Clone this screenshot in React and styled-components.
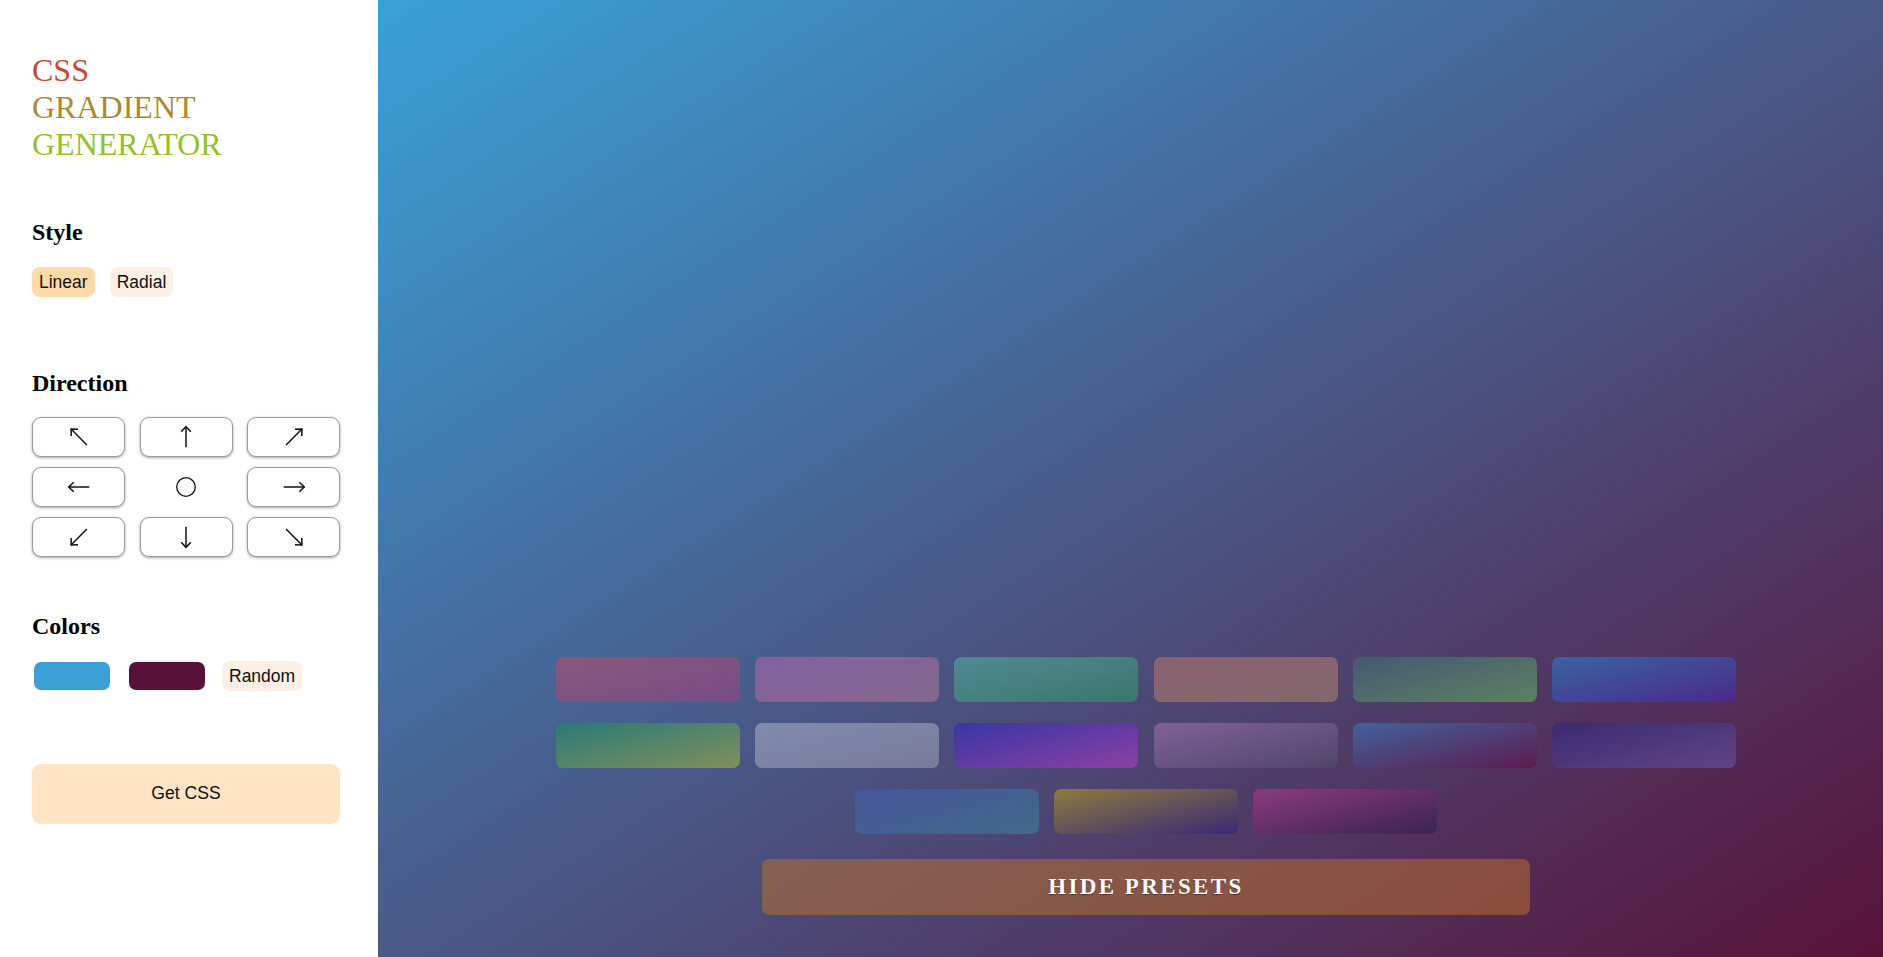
import React from "react";
import styled, { createGlobalStyle } from "styled-components";

const Global = createGlobalStyle`
  html, body { margin: 0; padding: 0; }
  body { font-family: "Liberation Serif", "Times New Roman", serif; overflow: hidden; }
  * { box-sizing: border-box; }
`;

const Layout = styled.div`
  display: flex;
  width: 100vw;
  height: 100vh;
`;

const Sidebar = styled.aside`
  flex: 0 0 378px;
  background: #fff;
  padding: 52px 0 0 32px;
  display: flex;
  flex-direction: column;
`;

const Title = styled.h1`
  margin: 0;
  font-family: "Liberation Serif", serif;
  font-weight: 400;
  font-size: 32px;
  line-height: 37px;
`;

const TitleLine = styled.span`
  display: block;
  color: ${(p) => p.$color};
`;

const Section = styled.section`
  margin-top: ${(p) => p.$top}px;
`;

const Heading = styled.h2`
  margin: 0 0 20px;
  font-family: "Liberation Serif", serif;
  font-weight: 700;
  font-size: 24px;
  line-height: 27.6px;
  color: #000;
`;

const Row = styled.div`
  display: flex;
  align-items: center;
  gap: ${(p) => p.$gap || 15}px;
`;

const Pill = styled.button`
  font-family: "Liberation Sans", Arial, sans-serif;
  font-size: 17.5px;
  line-height: 20px;
  padding: 5px 7px;
  margin-left: ${(p) => p.$ml || 0}px;
  border: none;
  border-radius: 8px;
  color: #111;
  background: ${(p) => (p.$active ? "#fedaa8" : "#fcefe4")};
  cursor: pointer;
`;

const DirGrid = styled.div`
  display: grid;
  grid-template-columns: repeat(3, 93px);
  grid-auto-rows: 40px;
  column-gap: 14.5px;
  row-gap: 10px;
`;

const DirButton = styled.button`
  display: flex;
  align-items: center;
  justify-content: center;
  padding: 0;
  background: #fff;
  border: 1px solid #9a9a9a;
  border-radius: 9px;
  box-shadow: 0 1px 3px rgba(0, 0, 0, 0.35);
  cursor: pointer;
`;

const DirCenter = styled.div`
  display: flex;
  align-items: center;
  justify-content: center;
`;

const Swatch = styled.span`
  display: block;
  width: 76px;
  height: 28px;
  border-radius: 7px;
  background: ${(p) => p.$color};
  margin-left: ${(p) => p.$ml || 0}px;
`;

const GetCss = styled.button`
  width: 308px;
  height: 60px;
  border: none;
  border-radius: 9px;
  background: #fee3c4;
  font-family: "Liberation Sans", Arial, sans-serif;
  font-size: 17.6px;
  color: #111;
  cursor: pointer;
`;

const Main = styled.main`
  flex: 1;
  background: linear-gradient(to bottom right, #39a1d7, #58123a);
  display: flex;
  flex-direction: column;
  justify-content: flex-end;
  align-items: center;
  padding: 0 0 42px 31px;
`;

const Presets = styled.div`
  width: 1181px;
  display: flex;
  flex-wrap: wrap;
  justify-content: center;
  column-gap: 15.3px;
  row-gap: 21px;
`;

const Preset = styled.button`
  width: 184px;
  height: 45px;
  border: none;
  padding: 0;
  border-radius: 7px;
  background: linear-gradient(to bottom right, ${(p) => p.$from}, ${(p) => p.$to});
  cursor: pointer;
`;

const HideButton = styled.button`
  margin-top: 25px;
  width: 768px;
  height: 56px;
  border: none;
  border-radius: 7px;
  background: rgba(192, 114, 42, 0.5);
  color: #fff;
  font-family: "Liberation Serif", serif;
  font-weight: 700;
  font-size: 23px;
  letter-spacing: 2.4px;
  text-shadow: 0 1px 1px rgba(0, 0, 0, 0.35);
  cursor: pointer;
`;

function Arrow({ angle = 0, len = 10.3 }) {
  return (
    <svg width="26" height="26" viewBox="-13 -13 26 26" aria-hidden="true">
      <g transform={`rotate(${angle})`} fill="none" stroke="#111" strokeWidth="1.5" strokeLinejoin="miter">
        <line x1="0" y1={-len} x2="0" y2={len} />
        <polyline points={`-4.8,${-len + 5} 0,${-len} 4.8,${-len + 5}`} />
      </g>
    </svg>
  );
}

function Ring() {
  return (
    <svg width="22" height="22" viewBox="0 0 22 22" aria-hidden="true">
      <circle cx="11" cy="11" r="9.3" fill="none" stroke="#111" strokeWidth="1.3" />
    </svg>
  );
}

const directions = [
  { a: -45, len: 11.2 },
  { a: 0 },
  { a: 45, len: 11.2 },
  { a: -90 },
  null,
  { a: 90 },
  { a: -135, len: 11.2 },
  { a: 180 },
  { a: 135, len: 11.2 },
];

const presets = [
  ["#865a7b", "#774c87"],
  ["#8460a3", "#83678a"],
  ["#4f8a94", "#3b756c"],
  ["#89626f", "#84676f"],
  ["#465872", "#5c8062"],
  ["#3a63a4", "#4a2a88"],
  ["#2a7a78", "#80905a"],
  ["#7f8bb0", "#7a7a98"],
  ["#3836a4", "#8c40a4"],
  ["#7f6298", "#50456a"],
  ["#41629c", "#5c1c50"],
  ["#3b2a72", "#604585"],
  ["#47569a", "#40698a"],
  ["#8f7a3e", "#382a74"],
  ["#8c3a7e", "#3a2450"],
];

export default function App() {
  return (
    <>
      <Global />
      <Layout>
        <Sidebar>
          <Title>
            <TitleLine $color="#c9472f">CSS</TitleLine>
            <TitleLine $color="#ad892c">GRADIENT</TitleLine>
            <TitleLine $color="#93c12a">GENERATOR</TitleLine>
          </Title>

          <Section $top={56}>
            <Heading>Style</Heading>
            <Row $gap={15}>
              <Pill $active>Linear</Pill>
              <Pill>Radial</Pill>
            </Row>
          </Section>

          <Section $top={73}>
            <Heading>Direction</Heading>
            <DirGrid>
              {directions.map((d, i) =>
                d ? (
                  <DirButton key={i}>
                    <Arrow angle={d.a} len={d.len} />
                  </DirButton>
                ) : (
                  <DirCenter key={i}>
                    <Ring />
                  </DirCenter>
                )
              )}
            </DirGrid>
          </Section>

          <Section $top={56}>
            <Heading>Colors</Heading>
            <Row $gap={19}>
              <Swatch $color="#3aa0d6" $ml={2} />
              <Swatch $color="#58123a" />
              <Pill $ml={-2}>Random</Pill>
            </Row>
          </Section>

          <Section $top={73}>
            <GetCss>Get CSS</GetCss>
          </Section>
        </Sidebar>

        <Main>
          <Presets>
            {presets.map(([f, t], i) => (
              <Preset key={i} $from={f} $to={t} />
            ))}
          </Presets>
          <HideButton>HIDE PRESETS</HideButton>
        </Main>
      </Layout>
    </>
  );
}
